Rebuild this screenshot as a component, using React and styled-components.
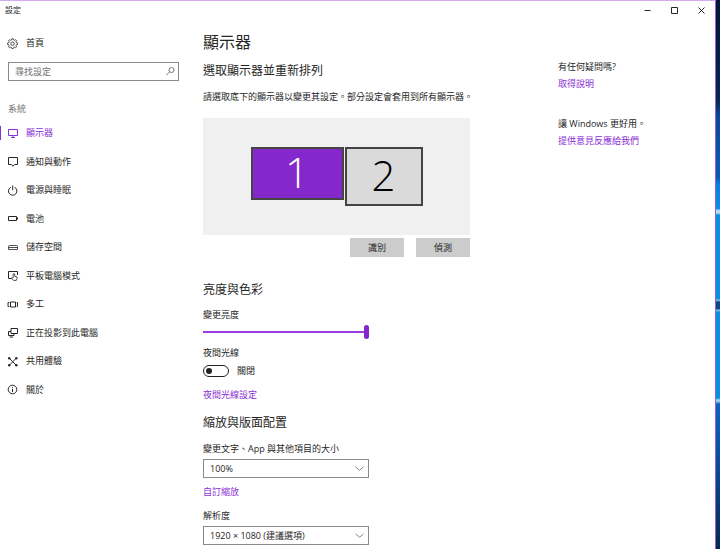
import React, { useState } from 'react';
import styled, { createGlobalStyle } from 'styled-components';

const GlobalStyle = createGlobalStyle`
  * {
    box-sizing: border-box;
  }

  body {
    margin: 0;
    font-family: 'Open Sans', 'Noto Sans CJK TC', sans-serif;
    font-size: 9px;
    line-height: 12px;
    color: #262626;
  }

  button, input, select {
    font: inherit;
    color: inherit;
    margin: 0;
  }

  h1, h2, p {
    margin: 0;
    font-weight: 400;
  }
`;

const Desktop = styled.div`
  min-height: 100vh;
  padding-right: 4px;
  display: flex;
  background: linear-gradient(
    #031636 0, #052650 100px, #0a489a 116px, #0b5cb4 178px, #0b7fe0 184px, #0b8fe4 209px,
    #b9dcea 210px, #b9dcea 213px, #0b8fdf 215px, #0b8fdf 299px,
    #9fd0ea 300px, #0d4788 302px, #0d4788 309px, #9fd0ea 310px,
    #0b8fdf 312px, #0b8fdf 398px, #a8d4ea 400px, #a8d4ea 401px,
    #0d62c4 404px, #0a4f9c 460px, #06284d 549px
  );
`;

const Window = styled.div`
  flex: 1;
  min-width: 0;
  background: #fff;
  border-top: 1px solid #d3a8f5;
  border-right: 1px solid #9a5fe0;
`;

const TitleBar = styled.header`
  display: flex;
  align-items: center;
  justify-content: space-between;
  height: 18px;
  padding-left: 5px;
  font-size: 8px;
`;

const Controls = styled.div`
  display: flex;
`;

const ControlButton = styled.button`
  display: flex;
  align-items: center;
  justify-content: center;
  width: 27px;
  height: 18px;
  padding: 0;
  border: 0;
  background: none;
`;

const Content = styled.div`
  display: grid;
  grid-template-columns: 203px minmax(0, 267px) 1fr;
`;

const Sidebar = styled.aside`
  padding: 14px 24px 0 0;
`;

const NavLink = styled.a`
  position: relative;
  display: flex;
  flex: 1;
  align-items: center;
  gap: 8px;
  min-height: 20px;
  padding-left: 7px;
  color: ${props => (props.$active ? '#8a2fd6' : '#262626')};
  text-decoration: none;

  &::before {
    content: '';
    position: absolute;
    left: 0;
    width: 1px;
    height: 14px;
    background: ${props => (props.$active ? '#8a2fd6' : 'transparent')};
  }
`;

const SearchBox = styled.label`
  display: flex;
  align-items: center;
  height: 19px;
  margin: 9px 0 0 8px;
  padding: 0 2px 0 6px;
  border: 1px solid #8a8a8a;
`;

const SearchInput = styled.input`
  flex: 1;
  min-width: 0;
  padding: 0;
  border: 0;
  outline: 0;
  background: none;

  &::placeholder {
    color: #707070;
    opacity: 1;
  }
`;

const GroupTitle = styled.p`
  margin: 22px 0 4px 8px;
  color: #777;
`;

const Nav = styled.nav`
  display: flex;
  flex-direction: column;
  min-height: 285px;
`;

const Main = styled.main`
  padding: 12px 0 4px;
`;

const PageTitle = styled.h1`
  font-size: 16px;
  line-height: 22px;
`;

const SectionTitle = styled.h2`
  margin-top: ${props => props.$top}px;
  font-size: 12px;
  line-height: 16px;
`;

const Description = styled.p`
  margin-top: 12px;
  white-space: nowrap;
`;

const Canvas = styled.div`
  display: flex;
  align-items: flex-start;
  justify-content: center;
  gap: 1px;
  height: 117px;
  margin-top: 15px;
  padding-top: 29px;
  background: #f0f0f0;
`;

const Monitor = styled.button`
  width: ${props => (props.$active ? 93 : 78)}px;
  height: ${props => (props.$active ? 53 : 59)}px;
  padding: 0 0 3px;
  border: 2px solid #444;
  background: ${props => (props.$active ? '#8427cb' : '#dadada')};
  color: ${props => (props.$active ? '#fff' : '#000')};
  font-size: 42px;
  font-weight: 300;
  line-height: 46px;
`;

const Actions = styled.div`
  display: flex;
  justify-content: flex-end;
  gap: 12px;
  margin-top: 3px;
`;

const ActionButton = styled.button`
  width: 54px;
  height: 19px;
  padding: 0;
  border: 0;
  background: #ccc;
`;

const Field = styled.div`
  display: flex;
  flex-direction: column;
  align-items: flex-start;
  gap: ${props => props.$gap || 4}px;
  width: 166px;
  margin-top: ${props => props.$top}px;
`;

const Slider = styled.input`
  appearance: none;
  width: 100%;
  height: 14px;
  background: linear-gradient(#9a3ce0, #9a3ce0) center / 100% 2px no-repeat;

  &::-webkit-slider-thumb {
    appearance: none;
    width: 5px;
    height: 14px;
    border-radius: 3px;
    background: #8427cb;
  }
`;

const ToggleLabel = styled.label`
  display: flex;
  align-items: center;
  gap: 8px;
`;

const Toggle = styled.input`
  appearance: none;
  display: flex;
  align-items: center;
  width: 26px;
  height: 12px;
  padding: 0 2px;
  border: 1px solid #222;
  border-radius: 6px;

  &::before {
    content: '';
    width: 6px;
    height: 6px;
    border-radius: 50%;
    background: #222;
  }

  &:checked {
    justify-content: flex-end;
  }
`;

const TextLink = styled.a`
  display: block;
  margin-top: ${props => props.$top || 0}px;
  color: #8a2fd6;
  text-decoration: none;
`;

const SelectWrapper = styled.div`
  display: grid;
  align-items: center;
  width: 100%;

  > * {
    grid-area: 1 / 1;
  }

  > svg {
    justify-self: end;
    margin-right: 4px;
    pointer-events: none;
  }
`;

const Select = styled.select`
  appearance: none;
  width: 100%;
  height: 19px;
  padding: 0 6px;
  border: 1px solid #8a8a8a;
  border-radius: 0;
  background: #fff;
`;

const Help = styled.aside`
  padding: 39px 8px 0 88px;
  line-height: 17px;
`;

const HelpBlock = styled.section`
  margin-bottom: 23px;
`;

const iconPaths = {
  home: (
    <>
      <path
        strokeWidth=".8"
        d="M4.8.8h1.500l.3 1.200.9.4 1.100-.7 1 1-.7 1.100.4.9 1.200.3v1.500l-1.200.3-.4.9.7 1.100-1 1-1.100-.7-.9.4-.3 1.200H4.800l-.3-1.200-.9-.4-1.100.7-1-1 .7-1.100-.4-.9-1.200-.3V5l1.200-.3.4-.9-.7-1.100 1-1 1.100.7.9-.4z"
      />
      <circle cx="5.5" cy="5.7" r="1.7" strokeWidth=".8" />
    </>
  ),
  display: <path d="M1.500 1.500h9v6h-9zM6 7.500v2M4 9.500h4" />,
  notify: <path d="M1.500 1.500h9v7H7.500L6 10.200 4.500 8.500h-3z" />,
  power: <path d="M3.800 2.300a4.200 4.200 0 1 0 3.800 0M5.700.5v4.700" />,
  battery: <path d="M1.500 3.500h8v4h-8zM10.500 4.500v2" />,
  storage: <path d="M1.500 7.500v-3q0-1 1-1h7q1 0 1 1v3zM1.500 5.500h9" strokeWidth=".8" />,
  tablet: (
    <>
      <path d="M4.500 8.500h-3v-7h9V5" />
      <path d="M6.200 7.600V4q.8-1 1.500 0v2.300l2.300.6v1.800l-.7 1.700H6.500L4.300 8z" strokeWidth=".8" />
    </>
  ),
  multi: <path d="M3.500 3h5v5h-5zM2.300 3.500h-1.300v4h1.300M9.700 3.500h.8v4h-.8" />,
  project: <path d="M4 1.500h6.500v5H4zM4 4.500H1.500v4H7v-2M2.500 10h3.500" />,
  share: (
    <>
      <path d="M2.300 2.300l6.900 6.900M9.200 2.300L2.300 9.200" />
      <g fill="currentColor" stroke="none">
        <circle cx="2.200" cy="2.200" r="1.200" />
        <circle cx="9.300" cy="2.200" r="1.200" />
        <circle cx="2.200" cy="9.300" r="1.200" />
        <circle cx="9.300" cy="9.300" r="1.200" />
      </g>
    </>
  ),
  about: (
    <>
      <circle cx="5.500" cy="5.500" r="4.300" />
      <path d="M5.500 4.800v3.200M5.500 3v.9" />
    </>
  ),
  search: (
    <>
      <circle cx="6.500" cy="4" r="2.500" />
      <path d="M4.700 5.800L1.500 9" />
    </>
  ),
  chevron: <path d="M1.500 3.800l4 3.500 4-3.500" />,
  minimize: <path d="M2.500 5.500h6" />,
  maximize: <path d="M2.500 2.500h6v6h-6z" />,
  close: <path d="M2.500 2.500l6 6M8.500 2.500l-6 6" />,
};

const menu = [
  { icon: 'display', text: '顯示器' },
  { icon: 'notify', text: '通知與動作' },
  { icon: 'power', text: '電源與睡眠' },
  { icon: 'battery', text: '電池' },
  { icon: 'storage', text: '儲存空間' },
  { icon: 'tablet', text: '平板電腦模式' },
  { icon: 'multi', text: '多工' },
  { icon: 'project', text: '正在投影到此電腦' },
  { icon: 'share', text: '共用體驗' },
  { icon: 'about', text: '關於' },
];

function Icon({ name, color = 'currentColor' }) {
  return (
    <svg width="11" height="11" viewBox="0 0 11 11" fill="none" stroke={color} strokeWidth="1" aria-hidden="true">
      {iconPaths[name]}
    </svg>
  );
}

function Dropdown({ id, label, top, options }) {
  return (
    <Field $top={top}>
      <label htmlFor={id}>{label}</label>
      <SelectWrapper>
        <Select id={id}>
          {options.map(option => <option key={option}>{option}</option>)}
        </Select>
        <Icon name="chevron" color="#888" />
      </SelectWrapper>
    </Field>
  );
}

function App() {
  const [page, setPage] = useState('display');
  const [monitor, setMonitor] = useState(1);
  const [brightness, setBrightness] = useState(100);
  const [night, setNight] = useState(false);

  return (
    <Desktop lang="zh-TW">
      <GlobalStyle />
      <Window>
        <TitleBar>
          <span>設定</span>
          <Controls>
            <ControlButton aria-label="最小化"><Icon name="minimize" /></ControlButton>
            <ControlButton aria-label="最大化"><Icon name="maximize" /></ControlButton>
            <ControlButton aria-label="關閉"><Icon name="close" /></ControlButton>
          </Controls>
        </TitleBar>
        <Content>
          <Sidebar>
            <NavLink href="#home">
              <Icon name="home" />
              首頁
            </NavLink>
            <SearchBox>
              <SearchInput type="text" placeholder="尋找設定" aria-label="尋找設定" />
              <Icon name="search" color="#777" />
            </SearchBox>
            <GroupTitle>系統</GroupTitle>
            <Nav>
              {menu.map(item => (
                <NavLink
                  key={item.icon}
                  href={`#${item.icon}`}
                  $active={page === item.icon}
                  onClick={() => setPage(item.icon)}
                >
                  <Icon name={item.icon} />
                  {item.text}
                </NavLink>
              ))}
            </Nav>
          </Sidebar>
          <Main>
            <PageTitle>顯示器</PageTitle>
            <SectionTitle $top={10}>選取顯示器並重新排列</SectionTitle>
            <Description>請選取底下的顯示器以變更其設定。部分設定會套用到所有顯示器。</Description>
            <Canvas>
              {[1, 2].map(n => (
                <Monitor key={n} $active={monitor === n} onClick={() => setMonitor(n)}>{n}</Monitor>
              ))}
            </Canvas>
            <Actions>
              <ActionButton>識別</ActionButton>
              <ActionButton>偵測</ActionButton>
            </Actions>

            <SectionTitle $top={25}>亮度與色彩</SectionTitle>
            <Field $top={11}>
              <label htmlFor="brightness">變更亮度</label>
              <Slider
                id="brightness"
                type="range"
                value={brightness}
                onChange={e => setBrightness(Number(e.target.value))}
              />
            </Field>
            <Field $top={8} $gap={6}>
              <span id="night">夜間光線</span>
              <ToggleLabel>
                <Toggle
                  type="checkbox"
                  aria-describedby="night"
                  checked={night}
                  onChange={e => setNight(e.target.checked)}
                />
                {night ? '開啟' : '關閉'}
              </ToggleLabel>
            </Field>
            <TextLink href="#night" $top={12}>夜間光線設定</TextLink>

            <SectionTitle $top={14}>縮放與版面配置</SectionTitle>
            <Dropdown
              id="scale"
              label="變更文字、App 與其他項目的大小"
              top={12}
              options={['100%', '125%', '150%']}
            />
            <TextLink href="#scaling" $top={8}>自訂縮放</TextLink>
            <Dropdown
              id="resolution"
              label="解析度"
              top={12}
              options={['1920 × 1080 (建議選項)', '1600 × 900', '1280 × 720']}
            />
          </Main>
          <Help>
            <HelpBlock>
              <p>有任何疑問嗎?</p>
              <TextLink href="#help">取得說明</TextLink>
            </HelpBlock>
            <HelpBlock>
              <p>讓 Windows 更好用。</p>
              <TextLink href="#feedback">提供意見反應給我們</TextLink>
            </HelpBlock>
          </Help>
        </Content>
      </Window>
    </Desktop>
  );
}

export default App;
